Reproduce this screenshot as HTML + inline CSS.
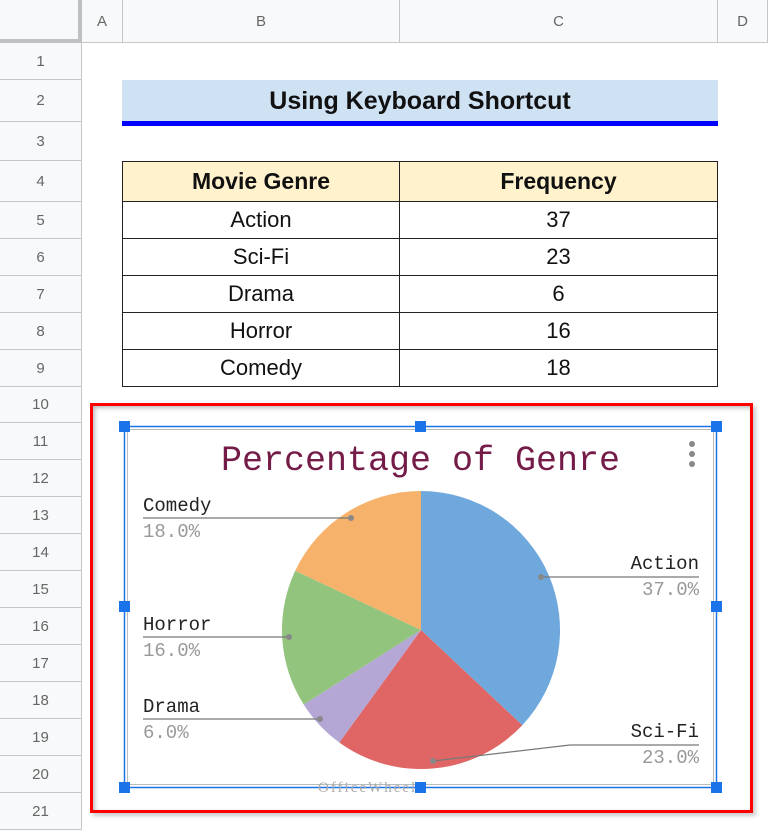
<!DOCTYPE html>
<html><head><meta charset="utf-8"><style>
*{margin:0;padding:0;box-sizing:border-box}
body{width:768px;height:830px;overflow:hidden;background:#fff;font-family:"Liberation Sans",Arial,sans-serif;position:relative}
.a{position:absolute}
.rh{position:absolute;left:0;width:82px;background:#f8f9fa;border-bottom:1px solid #c4c7c5;border-right:1px solid #c4c7c5;color:#666;font-size:15px;display:flex;align-items:center;justify-content:center}
.ch{position:absolute;top:0;height:43px;background:#f8f9fa;border-right:1px solid #c4c7c5;border-bottom:1px solid #c4c7c5;color:#666;font-size:15px;display:flex;align-items:center;justify-content:center}
.c{position:absolute;border-right:1px solid #222;border-bottom:1px solid #222;display:flex;align-items:center;justify-content:center;font-size:22px;color:#111}
.h{width:11px;height:11px;background:#1a73e8;position:absolute}
.m{font-family:"Liberation Mono",monospace;position:absolute;font-size:19px}
.r{text-align:right;width:200px}
</style></head><body>
<div class="a" style="left:0;top:0;width:82px;height:43px;background:#f8f9fa;border-right:4px solid #c0c0c0;border-bottom:4px solid #c0c0c0"></div>
<div class="ch" style="left:82px;width:41px">A</div>
<div class="ch" style="left:123px;width:277px">B</div>
<div class="ch" style="left:400px;width:318px">C</div>
<div class="ch" style="left:718px;width:50px">D</div>
<div class="rh" style="top:43px;height:37px">1</div>
<div class="rh" style="top:80px;height:42px">2</div>
<div class="rh" style="top:122px;height:39px">3</div>
<div class="rh" style="top:161px;height:41px">4</div>
<div class="rh" style="top:202px;height:37px">5</div>
<div class="rh" style="top:239px;height:37px">6</div>
<div class="rh" style="top:276px;height:37px">7</div>
<div class="rh" style="top:313px;height:37px">8</div>
<div class="rh" style="top:350px;height:37px">9</div>
<div class="rh" style="top:387px;height:36px">10</div>
<div class="rh" style="top:423px;height:37px">11</div>
<div class="rh" style="top:460px;height:37px">12</div>
<div class="rh" style="top:497px;height:37px">13</div>
<div class="rh" style="top:534px;height:37px">14</div>
<div class="rh" style="top:571px;height:37px">15</div>
<div class="rh" style="top:608px;height:37px">16</div>
<div class="rh" style="top:645px;height:37px">17</div>
<div class="rh" style="top:682px;height:37px">18</div>
<div class="rh" style="top:719px;height:37px">19</div>
<div class="rh" style="top:756px;height:37px">20</div>
<div class="rh" style="top:793px;height:37px">21</div>

<div class="a" style="left:122px;top:80px;width:596px;height:46px;background:#cfe2f3;border-bottom:5px solid #0000ff;display:flex;align-items:center;justify-content:center;font-weight:bold;font-size:25px;color:#111;padding-top:2px">Using Keyboard Shortcut</div>

<div class="a" style="left:122px;top:161px;width:596px;height:226px;border-left:1px solid #222;border-top:1px solid #222"></div>
<div class="c" style="left:123px;top:162px;width:277px;height:40px;background:#fff2cc;font-weight:bold;font-size:23px">Movie Genre</div>
<div class="c" style="left:400px;top:162px;width:318px;height:40px;background:#fff2cc;font-weight:bold;font-size:23px">Frequency</div>
<div class="c" style="left:123px;top:202px;width:277px;height:37px">Action</div>
<div class="c" style="left:400px;top:202px;width:318px;height:37px">37</div>
<div class="c" style="left:123px;top:239px;width:277px;height:37px">Sci-Fi</div>
<div class="c" style="left:400px;top:239px;width:318px;height:37px">23</div>
<div class="c" style="left:123px;top:276px;width:277px;height:37px">Drama</div>
<div class="c" style="left:400px;top:276px;width:318px;height:37px">6</div>
<div class="c" style="left:123px;top:313px;width:277px;height:37px">Horror</div>
<div class="c" style="left:400px;top:313px;width:318px;height:37px">16</div>
<div class="c" style="left:123px;top:350px;width:277px;height:37px">Comedy</div>
<div class="c" style="left:400px;top:350px;width:318px;height:37px">18</div>

<div class="a" style="left:90px;top:403px;width:663px;height:410px;border:3px solid #ff0000;background:#fff;box-shadow:inset 2px 2px 4px #bbb, 3px 3px 4px #ccc"></div>
<svg class="a" style="left:0;top:0" width="768" height="830">
<rect x="124.5" y="426.5" width="592" height="361" fill="none" stroke="#1a73e8" stroke-width="1.5"/>
<rect x="127.5" y="429.5" width="586" height="355" fill="none" stroke="#bbb" stroke-width="1"/>
<path d="M421,630 L421,491 A139,139 0 0 1 522.3,725.2 Z" fill="#6fa8dc"/>
<path d="M421,630 L522.3,725.2 A139,139 0 0 1 339.3,742.5 Z" fill="#e06666"/>
<path d="M421,630 L339.3,742.5 A139,139 0 0 1 303.7,704.5 Z" fill="#b4a7d6"/>
<path d="M421,630 L303.7,704.5 A139,139 0 0 1 295.2,570.8 Z" fill="#93c47d"/>
<path d="M421,630 L295.2,570.8 A139,139 0 0 1 421,491 Z" fill="#f6b26b"/>
<g stroke="#777" stroke-width="1.3" fill="none">
<path d="M143,518 L351,518"/><path d="M143,637 L289,637"/><path d="M143,719 L320,719"/>
<path d="M541,577 L699,577"/><path d="M433,761 L570,745 L699,745"/>
</g>
<g fill="#888"><circle cx="351" cy="518" r="3"/><circle cx="289" cy="637" r="3"/><circle cx="320" cy="719" r="3"/><circle cx="541" cy="577" r="3"/><circle cx="433" cy="761" r="3"/>
<circle cx="692" cy="444" r="3"/><circle cx="692" cy="454" r="3"/><circle cx="692" cy="464" r="3"/></g>
</svg>
<div class="m" style="left:221px;top:441px;font-size:35px;color:#741b47;line-height:40px">Percentage of Genre</div>
<div class="m" style="left:143px;top:495px;color:#222">Comedy</div>
<div class="m" style="left:143px;top:521px;color:#999">18.0%</div>
<div class="m" style="left:143px;top:614px;color:#222">Horror</div>
<div class="m" style="left:143px;top:640px;color:#999">16.0%</div>
<div class="m" style="left:143px;top:696px;color:#222">Drama</div>
<div class="m" style="left:143px;top:722px;color:#999">6.0%</div>
<div class="m r" style="left:499px;top:553px;color:#222">Action</div>
<div class="m r" style="left:499px;top:579px;color:#999">37.0%</div>
<div class="m r" style="left:499px;top:721px;color:#222">Sci-Fi</div>
<div class="m r" style="left:499px;top:747px;color:#999">23.0%</div>
<div class="a" style="left:318px;top:780px;font-family:'Liberation Serif',serif;font-size:15px;color:#aaa;letter-spacing:2px">OfficeWheel</div>
<div class="h" style="left:119px;top:421px"></div><div class="h" style="left:415px;top:421px"></div><div class="h" style="left:711px;top:421px"></div>
<div class="h" style="left:119px;top:601px"></div><div class="h" style="left:711px;top:601px"></div>
<div class="h" style="left:119px;top:782px"></div><div class="h" style="left:415px;top:782px"></div><div class="h" style="left:711px;top:782px"></div>
</body></html>
